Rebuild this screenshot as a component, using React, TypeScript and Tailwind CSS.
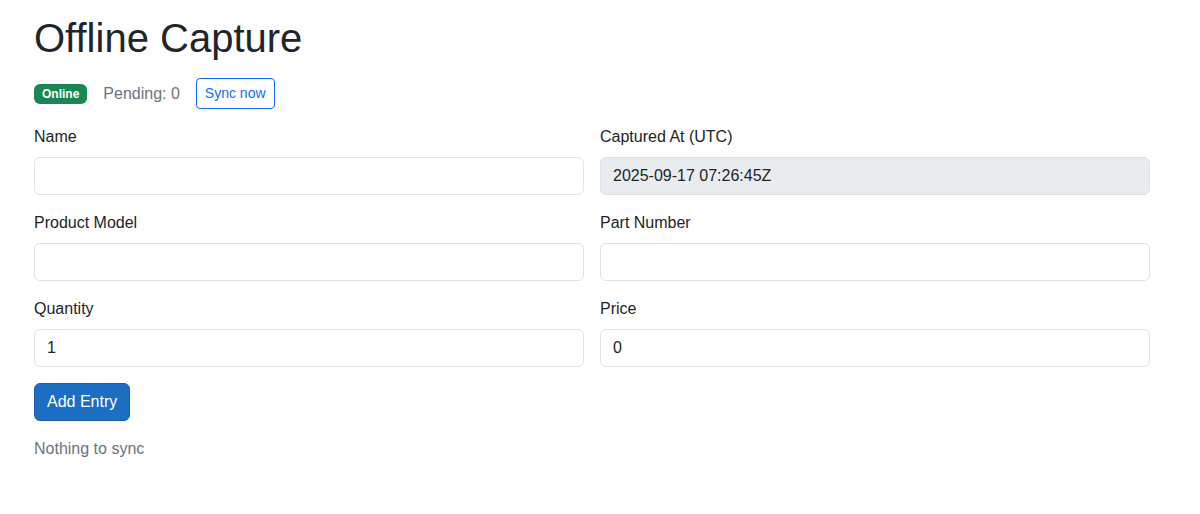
import { useState } from 'react';

const fieldClass =
  'block w-full h-[38px] px-3 py-[6px] text-[16px] leading-6 text-[#212529] bg-white border border-[#dee2e6] rounded-[6px] outline-none';

function Field({
  label,
  value,
  onChange,
  readOnly,
}: {
  label: string;
  value: string;
  onChange?: (v: string) => void;
  readOnly?: boolean;
}) {
  return (
    <div className="mb-4">
      <label className="block mb-2 text-[16px] leading-6 text-[#212529]">{label}</label>
      <input
        type="text"
        value={value}
        readOnly={readOnly}
        onChange={(e) => onChange?.(e.target.value)}
        className={readOnly ? `${fieldClass} !bg-[#e9ecef]` : fieldClass}
      />
    </div>
  );
}

export default function App() {
  const [form, setForm] = useState({
    name: '',
    model: '',
    part: '',
    quantity: '1',
    price: '0',
  });
  const [pending] = useState(0);

  return (
    <div className="min-h-[514px] bg-white font-['Liberation_Sans',Arial,sans-serif] text-[#212529]">
      <div className="w-[1116px] ml-[34px] pt-[14px]">
        <h1 className="text-[40px] leading-[48px] font-normal mb-4">Offline Capture</h1>

        {/* Status row */}
        <div className="flex items-center gap-4 mb-4">
          <span className="inline-block bg-[#198754] text-white text-[12px] font-bold leading-none px-[8px] py-[4px] rounded-[6px]">
            Online
          </span>
          <span className="text-[16px] leading-6 text-[#6c757d]">Pending: {pending}</span>
          <button className="border border-[#0d6efd] text-[#0d6efd] bg-white text-[14px] leading-[21px] px-2 py-1 rounded-[4px]">
            Sync now
          </button>
        </div>

        {/* Form */}
        <div className="grid grid-cols-2 gap-x-4">
          <Field label="Name" value={form.name} onChange={(v) => setForm({ ...form, name: v })} />
          <Field label="Captured At (UTC)" value="2025-09-17 07:26:45Z" readOnly />
          <Field label="Product Model" value={form.model} onChange={(v) => setForm({ ...form, model: v })} />
          <Field label="Part Number" value={form.part} onChange={(v) => setForm({ ...form, part: v })} />
          <Field label="Quantity" value={form.quantity} onChange={(v) => setForm({ ...form, quantity: v })} />
          <Field label="Price" value={form.price} onChange={(v) => setForm({ ...form, price: v })} />
        </div>

        <button className="block mb-4 bg-[#1b6ec2] border border-[#1861ac] text-white text-[16px] leading-6 px-3 py-[6px] rounded-[6px]">
          Add Entry
        </button>

        <div className="text-[16px] leading-6 text-[#6c757d]">Nothing to sync</div>
      </div>
    </div>
  );
}
